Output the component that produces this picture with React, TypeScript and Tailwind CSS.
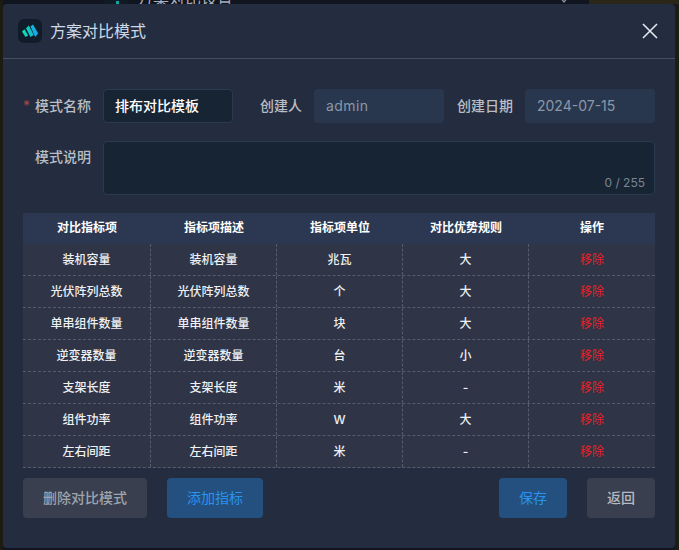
const rows = [
  ["装机容量", "装机容量", "兆瓦", "大"],
  ["光伏阵列总数", "光伏阵列总数", "个", "大"],
  ["单串组件数量", "单串组件数量", "块", "大"],
  ["逆变器数量", "逆变器数量", "台", "小"],
  ["支架长度", "支架长度", "米", "-"],
  ["组件功率", "组件功率", "W", "大"],
  ["左右间距", "左右间距", "米", "-"],
];
const headers = ["对比指标项", "指标项描述", "指标项单位", "对比优势规则", "操作"];
const font = "font-['Inter','Noto_Sans_CJK_SC',sans-serif]";

function Logo() {
  return (
    <div className="flex h-6 w-6 items-center justify-center rounded-md bg-[#111c2a]">
      <svg width="18" height="14" viewBox="0 0 18 14">
        <defs>
          <linearGradient id="lg" x1="0" y1="0" x2="1" y2="0">
            <stop offset="0" stopColor="#07e6ac" />
            <stop offset="1" stopColor="#1a9ff0" />
          </linearGradient>
        </defs>
        <path d="M1 7.5 L3.5 5.2 L7.2 11.5 L4.5 13 Z M5 4.2 L7.8 1.5 L12.8 11 L9.5 13 Z M9.5 2.4 L12 0.6 L17.2 9.5 L14.2 13 Z" fill="url(#lg)" />
      </svg>
    </div>
  );
}

export default function App() {
  return (
    <div className={`relative h-[550px] w-[679px] overflow-hidden bg-[#11151f] ${font}`}>
      <div className="absolute left-0 top-0 h-full w-[3px] bg-[#1c1c14]" />
      <div className="absolute right-0 top-0 h-full w-[4px] bg-[#1c1c14]" />
      <div className="absolute right-0 top-0 h-[4px] w-[90px] bg-[#2a2718]" />
      <div className="absolute left-[104px] top-0 h-[4px] w-6 bg-[#0f1a24]" />
      <div className="absolute left-[116px] top-[1px] h-[3px] w-[3px] bg-[#12a5a0]" />
      <div className="absolute left-[137px] top-[-10px] text-base leading-none text-[#a8aebb]">方案对比设置</div>
      <svg className="absolute left-[557px] top-[-4px]" width="16" height="8" viewBox="0 0 16 8" fill="none" stroke="#8d95a3" strokeWidth="1.2">
        <path d="M2 0 L7 6 L12 0" />
      </svg>
      <div className="absolute left-[3px] top-[4px] flex h-[544px] w-[672px] flex-col rounded-[4px] bg-[#232d3f]">
        <div className="flex h-[54.5px] shrink-0 items-center justify-between border-b border-[#454d5e] pl-[15px] pr-[17px]">
          <div className="flex items-center gap-2">
            <Logo />
            <span className="text-base text-[#cfd9e8]">方案对比模式</span>
          </div>
          <svg width="16" height="16" viewBox="0 0 16 16" fill="none" stroke="#e8eef6" strokeWidth="1.5">
            <path d="M1 1 L15 15 M15 1 L1 15" />
          </svg>
        </div>

        <div className="flex flex-col px-5 pt-[30px]">
          <div className="flex h-[34px] items-center text-sm font-medium text-[#b9bdc5]">
            <div className="flex w-[80px] items-center justify-end gap-[5px] pr-3">
              <span className="font-normal text-[#a04a50]">*</span>
              <span>模式名称</span>
            </div>
            <div className="flex h-[34px] w-[130px] items-center rounded border border-[#2b3a4e] bg-[#172433] pl-[11px] text-white">
              排布对比模板
            </div>
            <div className="ml-[27px] w-[42px]">创建人</div>
            <div className="ml-3 flex h-[34px] w-[130px] items-center rounded bg-[#29374e] pl-3 font-normal tracking-[0.4px] text-[#8a97a8]">
              admin
            </div>
            <div className="ml-[13px] w-[56px]">创建日期</div>
            <div className="ml-3 flex h-[34px] w-[130px] items-center rounded bg-[#29374e] pl-3 font-normal text-[#8a97a8]">
              2024-07-15
            </div>
          </div>

          <div className="mt-[18px] flex h-[54px] text-sm font-medium text-[#b9bdc5]">
            <div className="w-[80px] pr-3 pt-[6px] text-right">模式说明</div>
            <div className="relative w-[552px] rounded border border-[#2b3a4e] bg-[#172433]">
              <span className="absolute bottom-[3px] right-[9px] text-xs font-normal text-[#7a8594]">0 / 255</span>
            </div>
          </div>

          <div className="mt-[18px] w-[632px] text-xs font-medium text-[#eef0f3]">
            <div className="grid h-[31px] grid-cols-[128px_126px_126px_126px_126px] items-center bg-[#2c3852] text-center font-bold text-white">
              {headers.map((h) => (
                <div key={h}>{h}</div>
              ))}
            </div>
            {rows.map((r) => (
              <div
                key={r[0]}
                className="grid h-8 grid-cols-[128px_126px_126px_126px_126px] border-b border-dashed border-[#565c6c] bg-[#2f3546] text-center"
              >
                {r.map((c, i) => (
                  <div key={i} className="flex items-center justify-center border-r border-dashed border-[#565c6c] pt-[2px]">
                    {c}
                  </div>
                ))}
                <div className="flex items-center justify-center pt-[2px] font-normal text-[#ee1c25]">移除</div>
              </div>
            ))}
          </div>

          <div className="mt-[10px] flex h-10 text-sm">
            <button className="h-10 w-[124px] rounded bg-[#393f4f] font-medium text-[#9ea4ae]">删除对比模式</button>
            <button className="ml-5 h-10 w-[96px] rounded bg-[#23507f] text-[#2a93f0]">添加指标</button>
            <button className="ml-auto h-10 w-[68px] rounded bg-[#23507f] text-[#2a93f0]">保存</button>
            <button className="ml-5 h-10 w-[68px] rounded bg-[#393f4f] font-medium text-[#b4b9c2]">返回</button>
          </div>
        </div>
      </div>
    </div>
  );
}
